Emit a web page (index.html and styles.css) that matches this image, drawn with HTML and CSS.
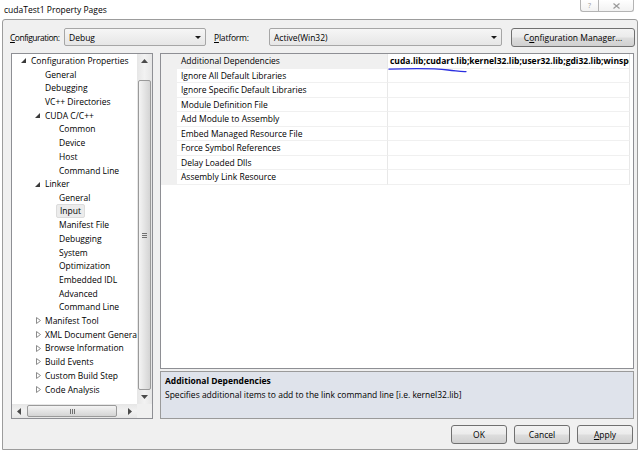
FILE: index.html
```html
<!DOCTYPE html>
<html lang="en">
<head>
    <meta charset="UTF-8">
    <title>cudaTest1 Property Pages</title>
    <link rel="stylesheet" href="styles.css">
</head>
<body>

<div class="titlebar">
    <span class="title">cudaTest1 Property Pages</span>
    <div class="caption-btns">
        <span class="cap help">?</span>
        <span class="cap close"><svg width="7" height="6"><path d="M0.5 0.5 L6.5 5.5 M6.5 0.5 L0.5 5.5" stroke="#9a9a9a" stroke-width="1.2" fill="none"/></svg></span>
    </div>
</div>

<div class="dialog">
    <!-- Configuration / platform selectors -->
    <div class="config-bar">
        <span class="cfg-label"><u>C</u>onfiguration:</span>
        <div class="combo combo-config">Debug<span class="combo-arrow"></span></div>
        <span class="plat-label"><u>P</u>latform:</span>
        <div class="combo combo-platform">Active(Win32)<span class="combo-arrow"></span></div>
        <button class="btn btn-manager">C<u>o</u>nfiguration Manager...</button>
    </div>

    <div class="main">
        <!-- Category tree -->
        <div class="tree">
            <div class="tree-body">
                <ul class="tree-items">
                    <li class="lvl0"><span class="exp"><svg width="5" height="5"><path d="M5 0 L5 5 L0 5 Z" fill="#3a3a3a"/></svg></span>Configuration Properties</li>
                    <li class="lvl1"><span class="exp"></span>General</li>
                    <li class="lvl1"><span class="exp"></span>Debugging</li>
                    <li class="lvl1"><span class="exp"></span>VC++ Directories</li>
                    <li class="lvl1"><span class="exp"><svg width="5" height="5"><path d="M5 0 L5 5 L0 5 Z" fill="#3a3a3a"/></svg></span>CUDA C/C++</li>
                    <li class="lvl2"><span class="exp"></span>Common</li>
                    <li class="lvl2"><span class="exp"></span>Device</li>
                    <li class="lvl2"><span class="exp"></span>Host</li>
                    <li class="lvl2"><span class="exp"></span>Command Line</li>
                    <li class="lvl1"><span class="exp"><svg width="5" height="5"><path d="M5 0 L5 5 L0 5 Z" fill="#3a3a3a"/></svg></span>Linker</li>
                    <li class="lvl2"><span class="exp"></span>General</li>
                    <li class="lvl2"><span class="exp"></span><span class="selected">Input</span></li>
                    <li class="lvl2"><span class="exp"></span>Manifest File</li>
                    <li class="lvl2"><span class="exp"></span>Debugging</li>
                    <li class="lvl2"><span class="exp"></span>System</li>
                    <li class="lvl2"><span class="exp"></span>Optimization</li>
                    <li class="lvl2"><span class="exp"></span>Embedded IDL</li>
                    <li class="lvl2"><span class="exp"></span>Advanced</li>
                    <li class="lvl2"><span class="exp"></span>Command Line</li>
                    <li class="lvl1"><span class="exp closed"><svg width="5" height="7"><path d="M0.5 0.5 L4.5 3.5 L0.5 6.5 Z" fill="none" stroke="#8c8c8c"/></svg></span>Manifest Tool</li>
                    <li class="lvl1"><span class="exp closed"><svg width="5" height="7"><path d="M0.5 0.5 L4.5 3.5 L0.5 6.5 Z" fill="none" stroke="#8c8c8c"/></svg></span>XML Document Generator</li>
                    <li class="lvl1"><span class="exp closed"><svg width="5" height="7"><path d="M0.5 0.5 L4.5 3.5 L0.5 6.5 Z" fill="none" stroke="#8c8c8c"/></svg></span>Browse Information</li>
                    <li class="lvl1"><span class="exp closed"><svg width="5" height="7"><path d="M0.5 0.5 L4.5 3.5 L0.5 6.5 Z" fill="none" stroke="#8c8c8c"/></svg></span>Build Events</li>
                    <li class="lvl1"><span class="exp closed"><svg width="5" height="7"><path d="M0.5 0.5 L4.5 3.5 L0.5 6.5 Z" fill="none" stroke="#8c8c8c"/></svg></span>Custom Build Step</li>
                    <li class="lvl1"><span class="exp closed"><svg width="5" height="7"><path d="M0.5 0.5 L4.5 3.5 L0.5 6.5 Z" fill="none" stroke="#8c8c8c"/></svg></span>Code Analysis</li>
                </ul>
                <div class="vscroll">
                    <span class="sb-arrow"><svg width="7" height="4"><path d="M0 4 L3.5 0 L7 4 Z" fill="#4a4a4a"/></svg></span>
                    <div class="vtrack">
                        <div class="vthumb"><span class="grip-h"></span></div>
                    </div>
                    <span class="sb-arrow"><svg width="7" height="4"><path d="M0 0 L3.5 4 L7 0 Z" fill="#4a4a4a"/></svg></span>
                </div>
            </div>
            <div class="hbar-row">
                <div class="hscroll">
                    <span class="sb-arrow-h"><svg width="4" height="7"><path d="M4 0 L0 3.5 L4 7 Z" fill="#4a4a4a"/></svg></span>
                    <div class="htrack">
                        <div class="hthumb"><span class="grip-v"></span></div>
                    </div>
                    <span class="sb-arrow-h"><svg width="4" height="7"><path d="M0 0 L4 3.5 L0 7 Z" fill="#4a4a4a"/></svg></span>
                </div>
                <div class="corner"></div>
            </div>
        </div>

        <!-- Property grid and description -->
        <div class="right-pane">
            <div class="grid">
                <div class="prop-row sel">
                    <div class="gutter"></div>
                    <div class="prop-name">Additional Dependencies</div>
                    <div class="prop-value">cuda.lib;cudart.lib;kernel32.lib;user32.lib;gdi32.lib;winspool.lib;comdlg32.lib;advapi32.lib;shell32.lib;ole32.lib;oleaut32.lib;uuid.lib;odbc32.lib;odbccp32.lib;%(AdditionalDependencies)</div>
                </div>
                <div class="prop-row">
                    <div class="gutter"></div>
                    <div class="prop-name">Ignore All Default Libraries</div>
                    <div class="prop-value"></div>
                </div>
                <div class="prop-row">
                    <div class="gutter"></div>
                    <div class="prop-name">Ignore Specific Default Libraries</div>
                    <div class="prop-value"></div>
                </div>
                <div class="prop-row">
                    <div class="gutter"></div>
                    <div class="prop-name">Module Definition File</div>
                    <div class="prop-value"></div>
                </div>
                <div class="prop-row">
                    <div class="gutter"></div>
                    <div class="prop-name">Add Module to Assembly</div>
                    <div class="prop-value"></div>
                </div>
                <div class="prop-row">
                    <div class="gutter"></div>
                    <div class="prop-name">Embed Managed Resource File</div>
                    <div class="prop-value"></div>
                </div>
                <div class="prop-row">
                    <div class="gutter"></div>
                    <div class="prop-name">Force Symbol References</div>
                    <div class="prop-value"></div>
                </div>
                <div class="prop-row">
                    <div class="gutter"></div>
                    <div class="prop-name">Delay Loaded Dlls</div>
                    <div class="prop-value"></div>
                </div>
                <div class="prop-row">
                    <div class="gutter"></div>
                    <div class="prop-name">Assembly Link Resource</div>
                    <div class="prop-value"></div>
                </div>

                <!-- hand-drawn highlight under the value -->
                <svg class="scribble" width="80" height="6">
                    <path d="M1 1.2 C 20 0.6, 48 0.6, 60 2 S 72 3.8, 78 3.6" fill="none" stroke="#2a2ee0" stroke-width="1.3" stroke-linecap="round"/>
                </svg>
            </div>
            <div class="desc">
                <div class="desc-title">Additional Dependencies</div>
                <div>Specifies additional items to add to the link command line [i.e. kernel32.lib]</div>
            </div>
        </div>
    </div>

    <div class="buttons">
        <button class="btn">OK</button>
        <button class="btn">Cancel</button>
        <button class="btn"><u>A</u>pply</button>
    </div>
</div>

</body>
</html>
```

FILE: styles.css
```css
body {
    margin: 0;
    width: 640px;
    height: 452px;
    overflow: hidden;
    background-color: #ffffff;
    font-family: "Open Sans", sans-serif;
    font-size: 8.5px;
    color: #000000;
}
u {
    text-decoration-thickness: 1px;
    text-underline-offset: 1px;
}

/* Window caption */
.titlebar {
    height: 19px;
    display: flex;
    justify-content: space-between;
    align-items: flex-start;
}
.title {
    padding: 4px 0 0 4px;
    line-height: 12px;
}
.caption-btns {
    display: flex;
    margin-right: 6px;
}
.cap {
    height: 11px;
    border: 1px solid #b4b4b4;
    border-top: none;
    display: flex;
    justify-content: center;
    align-items: center;
    color: #9a9a9a;
    font-size: 7px;
    line-height: 1;
    background: linear-gradient(#ffffff, #f2f2f2);
}
.cap.help {
    width: 17px;
    border-right: none;
    border-radius: 0 0 0 3px;
}
.cap.close {
    width: 34px;
    border-radius: 0 0 3px 0;
}
.cap svg {
    display: block;
}

/* Dialog frame */
.dialog {
    box-sizing: border-box;
    margin: 0 2px;
    height: 431px;
    border: 1px solid #9c9c9c;
    border-radius: 3px 3px 0 0;
    background-color: #f0f0f0;
}
.config-bar {
    display: flex;
    align-items: center;
    height: 18px;
    margin: 8px 0 0 7px;
}
.config-bar > * {
    flex: none;
    white-space: nowrap;
}
.cfg-label {
    width: 54px;
    letter-spacing: -0.5px;
}
.plat-label {
    width: 55px;
    margin-left: 8px;
    letter-spacing: -0.2px;
}
.combo {
    box-sizing: border-box;
    height: 18px;
    border: 1px solid #a6a6a6;
    border-radius: 2px;
    background: linear-gradient(#f6f6f6, #e6e6e6);
    display: flex;
    align-items: center;
    justify-content: space-between;
    padding: 0 3px 0 4px;
}
.combo-config {
    width: 142px;
}
.combo-platform {
    width: 233px;
}
.combo-arrow {
    width: 0;
    height: 0;
    border-left: 3px solid transparent;
    border-right: 3px solid transparent;
    border-top: 3px solid #1a1a1a;
    margin-right: 1px;
}
.btn {
    box-sizing: border-box;
    width: 56px;
    height: 19px;
    padding: 0;
    border: 1px solid #707070;
    border-radius: 3px;
    background: linear-gradient(#f3f3f3 0%, #ebebeb 48%, #dddddd 52%, #d0d0d0 100%);
    font-family: "Open Sans", sans-serif;
    font-size: 8.5px;
    color: #000000;
}
.btn-manager {
    width: 124px;
    height: 19px;
    margin-left: 9px;
}

.main {
    display: flex;
    height: 366px;
    margin: 7px 0 0 8px;
}

/* Tree view */
.tree {
    box-sizing: border-box;
    width: 142px;
    height: 366px;
    border: 1px solid #8e8f94;
    background-color: #ffffff;
    display: flex;
    flex-direction: column;
}
.tree-body {
    flex: 1;
    display: flex;
    min-height: 0;
}
.tree-items {
    flex: 1;
    list-style: none;
    margin: 0;
    padding: 0;
    overflow: hidden;
    white-space: nowrap;
}
.tree-items li {
    height: 13.7px;
    line-height: 13.7px;
    display: flex;
    align-items: center;
}
.lvl0 { padding-left: 5px; }
.lvl1 { padding-left: 19px; }
.lvl2 { padding-left: 33px; }
.exp {
    width: 14px;
    flex: none;
    display: flex;
    align-items: center;
    padding-left: 4px;
    box-sizing: border-box;
}
.exp svg {
    display: block;
}
.exp.closed {
    padding-left: 5px;
}
.selected {
    margin-left: -3px;
    padding: 0 3px;
    line-height: 12px;
    background-color: #ececec;
    border: 1px solid #dcdcdc;
    border-radius: 2px;
}

/* Scrollbars */
.vscroll {
    width: 15px;
    flex: none;
    display: flex;
    flex-direction: column;
    background: linear-gradient(90deg, #e6e6e6, #f2f2f2 50%, #e6e6e6);
}
.sb-arrow {
    height: 14px;
    display: flex;
    justify-content: center;
    align-items: center;
}
.vtrack {
    flex: 1;
    padding: 12px 1px 0 1px;
    display: flex;
    flex-direction: column;
}
.vthumb {
    height: 308px;
    border: 1px solid #9a9a9a;
    border-radius: 2px;
    background: linear-gradient(90deg, #f4f4f4, #e4e4e4 50%, #d4d4d4);
    display: flex;
    justify-content: center;
    align-items: center;
}
.grip-h {
    width: 5px;
    height: 5px;
    background: repeating-linear-gradient(#707070 0 1px, transparent 1px 2px);
}
.hbar-row {
    height: 14px;
    display: flex;
    flex: none;
}
.hscroll {
    flex: 1;
    display: flex;
    background: linear-gradient(#e6e6e6, #f2f2f2 50%, #e6e6e6);
}
.sb-arrow-h {
    width: 14px;
    display: flex;
    justify-content: center;
    align-items: center;
}
.htrack {
    flex: 1;
    padding: 1px 0 1px 1px;
    display: flex;
}
.hthumb {
    width: 88px;
    border: 1px solid #9a9a9a;
    border-radius: 2px;
    background: linear-gradient(#f4f4f4, #e4e4e4 50%, #d4d4d4);
    display: flex;
    justify-content: center;
    align-items: center;
}
.grip-v {
    width: 5px;
    height: 5px;
    background: repeating-linear-gradient(90deg, #707070 0 1px, transparent 1px 2px);
}
.corner {
    width: 15px;
    background-color: #f0f0f0;
}

/* Property grid */
.right-pane {
    width: 474px;
    margin-left: 7px;
    display: flex;
    flex-direction: column;
}
.grid {
    box-sizing: border-box;
    height: 316px;
    border: 1px solid #8e8f94;
    background-color: #ffffff;
    position: relative;
}
.prop-row {
    display: flex;
    height: 14.5px;
    line-height: 13.5px;
    white-space: nowrap;
}
.gutter {
    width: 16px;
    flex: none;
    background-color: #f0f0f0;
}
.prop-name {
    box-sizing: border-box;
    width: 210px;
    flex: none;
    padding-left: 4px;
    border-bottom: 1px solid #f0f0f0;
}
.prop-value {
    flex: 1;
    padding-left: 2px;
    border-left: 1px solid #e8e8e8;
    border-right: 1px solid #e8e8e8;
    border-bottom: 1px solid #f0f0f0;
    overflow: hidden;
    font-weight: bold;
    margin-right: 3px;
}
.prop-row.sel .prop-name {
    background-color: #f0f0f0;
}
.scribble {
    position: absolute;
    left: 227px;
    top: 14px;
}

.desc {
    box-sizing: border-box;
    flex: 1;
    margin-top: 2px;
    border: 1px solid #9a9a9a;
    background-color: #dfe3eb;
    padding: 2px 4px;
    line-height: 14px;
}
.desc-title {
    font-weight: bold;
}

.buttons {
    display: flex;
    justify-content: flex-end;
    gap: 7px;
    margin-top: 6px;
    padding-right: 4px;
}
```
